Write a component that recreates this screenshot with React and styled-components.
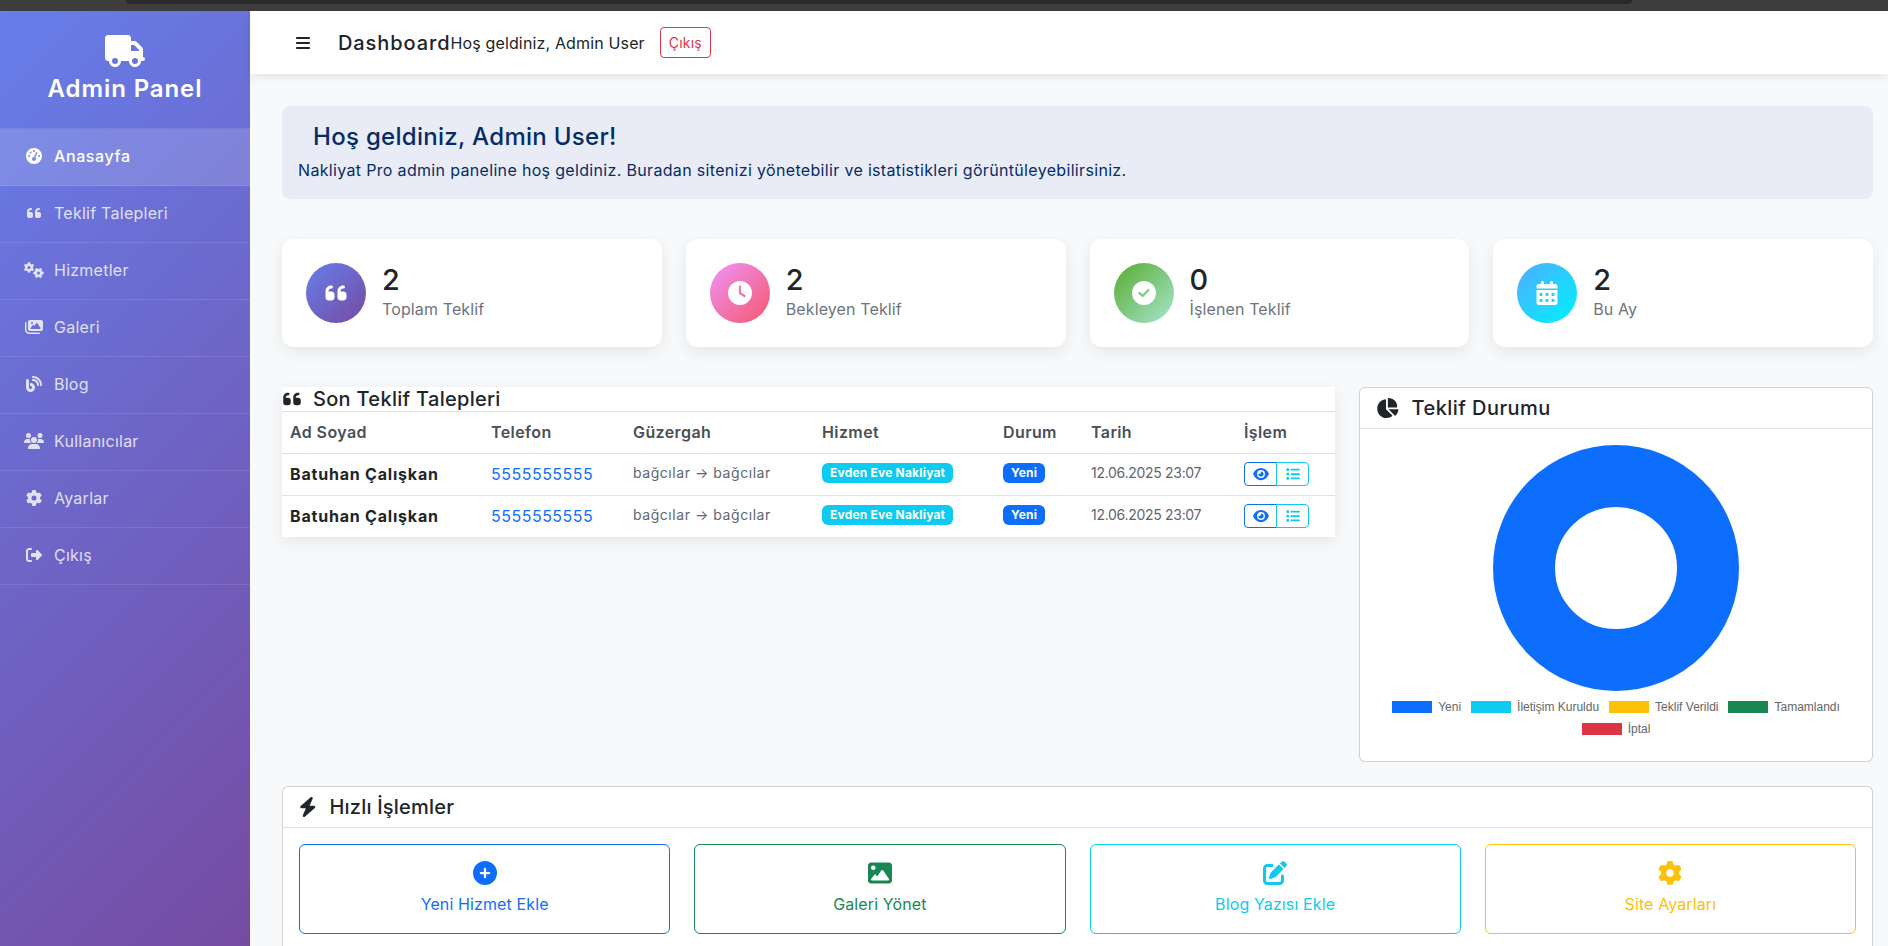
import React from "react";
import styled, { createGlobalStyle } from "styled-components";
import {
  FaTruck,
  FaGaugeHigh,
  FaQuoteLeft,
  FaGears,
  FaImages,
  FaBlog,
  FaUsers,
  FaGear,
  FaRightFromBracket,
  FaBars,
  FaClock,
  FaCircleCheck,
  FaCalendarDays,
  FaEye,
  FaList,
  FaChartPie,
  FaBolt,
  FaCirclePlus,
  FaImage,
  FaPenToSquare,
} from "react-icons/fa6";

const GlobalStyle = createGlobalStyle`
  html, body {
    margin: 0;
    height: 946px;
    overflow: hidden;
    background: #f8f9fa;
    font-family: "Inter", "Noto Sans", sans-serif;
    color: #212529;
  }
  * { box-sizing: border-box; }
`;

const menu = [
  { label: "Anasayfa", Icon: FaGaugeHigh, active: true },
  { label: "Teklif Talepleri", Icon: FaQuoteLeft },
  { label: "Hizmetler", Icon: FaGears },
  { label: "Galeri", Icon: FaImages },
  { label: "Blog", Icon: FaBlog },
  { label: "Kullanıcılar", Icon: FaUsers },
  { label: "Ayarlar", Icon: FaGear },
  { label: "Çıkış", Icon: FaRightFromBracket },
];

const stats = [
  { value: 2, label: "Toplam Teklif", Icon: FaQuoteLeft, from: "#667eea", to: "#764ba2" },
  { value: 2, label: "Bekleyen Teklif", Icon: FaClock, from: "#f093fb", to: "#f5576c" },
  { value: 0, label: "İşlenen Teklif", Icon: FaCircleCheck, from: "#56ab2f", to: "#a8e6cf" },
  { value: 2, label: "Bu Ay", Icon: FaCalendarDays, from: "#4facfe", to: "#00f2fe" },
];

const requests = [1, 2];

const legend = [
  { label: "Yeni", color: "#0d6efd" },
  { label: "İletişim Kuruldu", color: "#0dcaf0" },
  { label: "Teklif Verildi", color: "#ffc107" },
  { label: "Tamamlandı", color: "#198754" },
  { label: "İptal", color: "#dc3545" },
];

const actions = [
  { label: "Yeni Hizmet Ekle", Icon: FaCirclePlus, color: "#0d6efd" },
  { label: "Galeri Yönet", Icon: FaImage, color: "#198754" },
  { label: "Blog Yazısı Ekle", Icon: FaPenToSquare, color: "#0dcaf0" },
  { label: "Site Ayarları", Icon: FaGear, color: "#ffc107" },
];

const columns = [201, 142, 189, 181, 88, 153, 99];

const App = () => (
  <>
    <GlobalStyle />
    <BrowserEdge>
      <BrowserTab />
    </BrowserEdge>
    <Shell>
      <Sidebar>
        <Brand>
          <FaTruck />
          <BrandName>Admin Panel</BrandName>
        </Brand>
        <Nav>
          {menu.map(({ label, Icon, active }) => (
            <NavItem key={label} $active={active}>
              <NavIcon>
                <Icon />
              </NavIcon>
              {label}
            </NavItem>
          ))}
        </Nav>
      </Sidebar>

      <Main>
        <TopBar>
          <MenuToggle>
            <FaBars />
          </MenuToggle>
          <PageTitle>Dashboard</PageTitle>
          <Greeting>Hoş geldiniz, Admin User</Greeting>
          <LogoutButton>Çıkış</LogoutButton>
        </TopBar>

        <Content>
          <Welcome>
            <WelcomeTitle>Hoş geldiniz, Admin User!</WelcomeTitle>
            <WelcomeText>
              Nakliyat Pro admin paneline hoş geldiniz. Buradan sitenizi
              yönetebilir ve istatistikleri görüntüleyebilirsiniz.
            </WelcomeText>
          </Welcome>

          <StatGrid>
            {stats.map(({ value, label, Icon, from, to }) => (
              <StatCard key={label}>
                <StatIcon $from={from} $to={to}>
                  <Icon />
                </StatIcon>
                <StatText>
                  <StatValue>{value}</StatValue>
                  <StatLabel>{label}</StatLabel>
                </StatText>
              </StatCard>
            ))}
          </StatGrid>

          <MiddleRow>
            <TableCard>
              <TableTitle>
                <FaQuoteLeft />
                <span>Son Teklif Talepleri</span>
              </TableTitle>
              <Table>
                <colgroup>
                  {columns.map((width, i) => (
                    <Col key={i} $width={width} />
                  ))}
                </colgroup>
                <thead>
                  <tr>
                    <Th>Ad Soyad</Th>
                    <Th>Telefon</Th>
                    <Th>Güzergah</Th>
                    <Th>Hizmet</Th>
                    <Th>Durum</Th>
                    <Th>Tarih</Th>
                    <Th>İşlem</Th>
                  </tr>
                </thead>
                <tbody>
                  {requests.map((id) => (
                    <tr key={id}>
                      <Td><Name>Batuhan Çalışkan</Name></Td>
                      <Td><Phone>5555555555</Phone></Td>
                      <Td $raised><Route>bağcılar → bağcılar</Route></Td>
                      <Td $raised><Badge $bg="#0dcaf0">Evden Eve Nakliyat</Badge></Td>
                      <Td $raised><Badge $bg="#0d6efd">Yeni</Badge></Td>
                      <Td $raised><DateText>12.06.2025 23:07</DateText></Td>
                      <Td>
                        <ButtonGroup>
                          <GroupButton $color="#0d6efd"><FaEye /></GroupButton>
                          <GroupButton $color="#0dcaf0"><FaList /></GroupButton>
                        </ButtonGroup>
                      </Td>
                    </tr>
                  ))}
                </tbody>
              </Table>
            </TableCard>

            <ChartCard>
              <CardHeader $iconWidth={22.5}>
                <FaChartPie />
                <CardTitle $tracking={0.45}>Teklif Durumu</CardTitle>
              </CardHeader>
              <ChartBody>
                <Donut />
                <Legend>
                  {legend.map(({ label, color }) => (
                    <LegendItem key={label}>
                      <Swatch $color={color} />
                      {label}
                    </LegendItem>
                  ))}
                </Legend>
              </ChartBody>
            </ChartCard>
          </MiddleRow>

          <QuickCard>
            <CardHeader $iconWidth={17.5}>
              <FaBolt />
              <CardTitle $tracking={0.2}>Hızlı İşlemler</CardTitle>
            </CardHeader>
            <ActionGrid>
              {actions.map(({ label, Icon, color }) => (
                <ActionButton key={label} $color={color}>
                  <Icon />
                  {label}
                </ActionButton>
              ))}
            </ActionGrid>
          </QuickCard>
        </Content>
      </Main>
    </Shell>
  </>
);

const BrowserEdge = styled.div`
  height: 11px;
  background: #3d3d3d;
  padding: 0 256px 0 126px;
`;

const BrowserTab = styled.div`
  height: 4px;
  background: #2a2a2a;
  border-radius: 0 0 8px 8px;
`;

const Shell = styled.div`
  display: flex;
  height: 935px;
  overflow: hidden;
`;

const Sidebar = styled.aside`
  flex: 0 0 250px;
  height: 935px;
  color: #fff;
  background: linear-gradient(135deg, #667eea 0%, #764ba2 100%);
`;

const Brand = styled.div`
  height: 118px;
  padding-top: 24px;
  display: flex;
  flex-direction: column;
  align-items: center;
  border-bottom: 1px solid rgba(255, 255, 255, 0.1);

  svg {
    width: 40px;
    height: 32px;
  }
`;

const BrandName = styled.h4`
  margin: 7px 0 0;
  font-size: 24px;
  line-height: 29px;
  font-weight: 600;
  letter-spacing: 0.9px;
`;

const Nav = styled.nav`
  display: flex;
  flex-direction: column;
`;

const NavItem = styled.a`
  height: 57px;
  padding: 0 20px 2px 24px;
  display: flex;
  align-items: center;
  font-size: 16px;
  letter-spacing: ${(p) => (p.$active ? "0.6px" : "0.25px")};
  font-weight: ${(p) => (p.$active ? 500 : 400)};
  color: ${(p) => (p.$active ? "#fff" : "rgba(255, 255, 255, 0.8)")};
  background: ${(p) => (p.$active ? "rgba(255, 255, 255, 0.15)" : "transparent")};
  border-bottom: 1px solid rgba(255, 255, 255, 0.1);
`;

const NavIcon = styled.span`
  width: 20px;
  margin-right: 10px;
  display: flex;
  justify-content: center;

  svg {
    width: 20px;
    height: 16px;
  }
`;

const Main = styled.main`
  flex: 1;
  min-width: 0;
`;

const TopBar = styled.header`
  height: 63px;
  padding: 0 16px 0 45px;
  display: flex;
  align-items: center;
  background: #fff;
  box-shadow: 0 2px 10px rgba(0, 0, 0, 0.1);
`;

const MenuToggle = styled.span`
  display: flex;
  width: 43px;
  font-size: 16px;
  color: #212529;
`;

const PageTitle = styled.h5`
  margin: 0;
  font-size: 20px;
  font-weight: 500;
  letter-spacing: 0.9px;
`;

const Greeting = styled.span`
  font-size: 16px;
  letter-spacing: 0.15px;
  margin-right: 15px;
`;

const LogoutButton = styled.button`
  height: 31px;
  padding: 0 8px;
  font: inherit;
  font-size: 14px;
  letter-spacing: 0.2px;
  color: #dc3545;
  background: transparent;
  border: 1px solid #dc3545;
  border-radius: 4px;
`;

const Content = styled.div`
  padding: 32px 15px 0 32px;
`;

const Welcome = styled.section`
  height: 93px;
  padding: 16px 16px 0;
  background: #e9ecf7;
  border-radius: 8px;
  color: #052c65;
`;

const WelcomeTitle = styled.h4`
  margin: 0 0 7px 15px;
  font-size: 24px;
  line-height: 29px;
  font-weight: 500;
  letter-spacing: 0.3px;
`;

const WelcomeText = styled.p`
  margin: 0;
  font-size: 16px;
  line-height: 24px;
  letter-spacing: 0.33px;
`;

const StatGrid = styled.div`
  margin-top: 40px;
  display: grid;
  grid-template-columns: repeat(4, 1fr);
  gap: 24px;
`;

const StatCard = styled.div`
  height: 108px;
  padding: 0 24px;
  display: flex;
  align-items: center;
  gap: 16px;
  background: #fff;
  border-radius: 12px;
  box-shadow: 0 5px 15px rgba(0, 0, 0, 0.08);
`;

const StatIcon = styled.div`
  flex: 0 0 60px;
  height: 60px;
  border-radius: 50%;
  display: flex;
  align-items: center;
  justify-content: center;
  color: #fff;
  font-size: 24px;
  background: linear-gradient(135deg, ${(p) => p.$from}, ${(p) => p.$to});
`;

const StatText = styled.div`
  padding-bottom: 3px;
`;

const StatValue = styled.div`
  font-size: 28.8px;
  line-height: 34px;
  font-weight: 500;
`;

const StatLabel = styled.div`
  font-size: 16px;
  line-height: 24px;
  letter-spacing: 0.12px;
  color: #6c757d;
`;

const MiddleRow = styled.div`
  margin-top: 40px;
  display: flex;
  align-items: flex-start;
  gap: 24px;
`;

const TableCard = styled.section`
  flex: 0 0 1053px;
  background: #fff;
  box-shadow: 0 5px 15px rgba(0, 0, 0, 0.08);
`;

const TableTitle = styled.h5`
  margin: 0;
  height: 25px;
  display: flex;
  align-items: center;
  gap: 11px;
  font-size: 20px;
  line-height: 24px;
  font-weight: 500;
  letter-spacing: 0.3px;
  border-bottom: 1px solid #dee2e6;
`;

const Table = styled.table`
  width: 100%;
  table-layout: fixed;
  border-collapse: collapse;
`;

const Col = styled.col`
  width: ${(p) => p.$width}px;
`;

const Th = styled.th`
  height: 41px;
  padding: 0 8px;
  text-align: left;
  font-size: 16px;
  font-weight: 600;
  letter-spacing: 0.4px;
  color: #495057;
  border-bottom: 1px solid #dee2e6;
`;

const Td = styled.td`
  height: 42px;
  padding: 0 8px ${(p) => (p.$raised ? "4px" : "0")};
  white-space: nowrap;
  border-bottom: 1px solid #dee2e6;

  tr:last-child > & {
    border-bottom: 0;
  }
`;

const Name = styled.strong`
  font-size: 16px;
  font-weight: 700;
  letter-spacing: 0.8px;
`;

const Phone = styled.a`
  font-size: 16px;
  letter-spacing: 0.5px;
  color: #0d6efd;
`;

const Route = styled.small`
  font-size: 14px;
  letter-spacing: 0.55px;
  color: #5f6670;
`;

const DateText = styled.small`
  font-size: 14px;
  letter-spacing: -0.3px;
  color: #5f6670;
`;

const Badge = styled.span`
  display: inline-block;
  padding: 4px 8px;
  font-size: 12px;
  line-height: 12px;
  font-weight: 700;
  letter-spacing: 0.2px;
  color: #fff;
  border-radius: 6px;
  background: ${(p) => p.$bg};
`;

const ButtonGroup = styled.div`
  display: inline-flex;
  vertical-align: middle;
`;

const GroupButton = styled.button`
  width: 33px;
  height: 24px;
  padding: 0;
  display: flex;
  align-items: center;
  justify-content: center;
  color: ${(p) => p.$color};
  background: transparent;
  border: 1px solid ${(p) => p.$color};

  svg {
    width: 16px;
    height: 14px;
  }

  &:first-child {
    border-radius: 4px 0 0 4px;
  }
  &:last-child {
    margin-left: -1px;
    border-radius: 0 4px 4px 0;
  }
`;

const CardBox = styled.section`
  background: #fff;
  border: 1px solid rgba(0, 0, 0, 0.175);
  border-radius: 6px;
`;

const ChartCard = styled(CardBox)`
  flex: 1;
  height: 375px;
`;

const CardHeader = styled.div`
  height: 41px;
  padding: 0 16px;
  display: flex;
  align-items: center;
  gap: 13px;
  border-bottom: 1px solid rgba(0, 0, 0, 0.125);

  svg {
    width: ${(p) => p.$iconWidth}px;
    height: 20px;
  }
`;

const CardTitle = styled.h5`
  margin: 0;
  font-size: 20px;
  line-height: 24px;
  font-weight: 500;
  letter-spacing: ${(p) => p.$tracking}px;
`;

const ChartBody = styled.div`
  padding: 16px 16px 0;
  display: flex;
  flex-direction: column;
  align-items: center;
`;

const Donut = styled.div`
  width: 246px;
  height: 246px;
  border-radius: 50%;
  border: 62px solid #0d6efd;
`;

const Legend = styled.div`
  margin-top: 10px;
  display: flex;
  flex-wrap: wrap;
  justify-content: center;
  gap: 10px;
  font-family: "Liberation Sans", Arial, sans-serif;
  font-size: 12px;
  line-height: 12px;
  color: #666;
`;

const LegendItem = styled.span`
  display: flex;
  align-items: center;
  gap: 6px;
`;

const Swatch = styled.i`
  width: 40px;
  height: 12px;
  background: ${(p) => p.$color};
`;

const QuickCard = styled(CardBox)`
  margin-top: 24px;
  height: 200px;
`;

const ActionGrid = styled.div`
  padding: 16px;
  display: grid;
  grid-template-columns: repeat(4, 1fr);
  gap: 24px;
`;

const ActionButton = styled.a`
  height: 90px;
  padding-top: 16px;
  display: flex;
  flex-direction: column;
  align-items: center;
  gap: 7px;
  font-size: 16px;
  line-height: 24px;
  letter-spacing: 0.12px;
  color: ${(p) => p.$color};
  border: 1px solid ${(p) => p.$color};
  border-radius: 6px;

  svg {
    font-size: 24px;
  }
`;

export default App;
